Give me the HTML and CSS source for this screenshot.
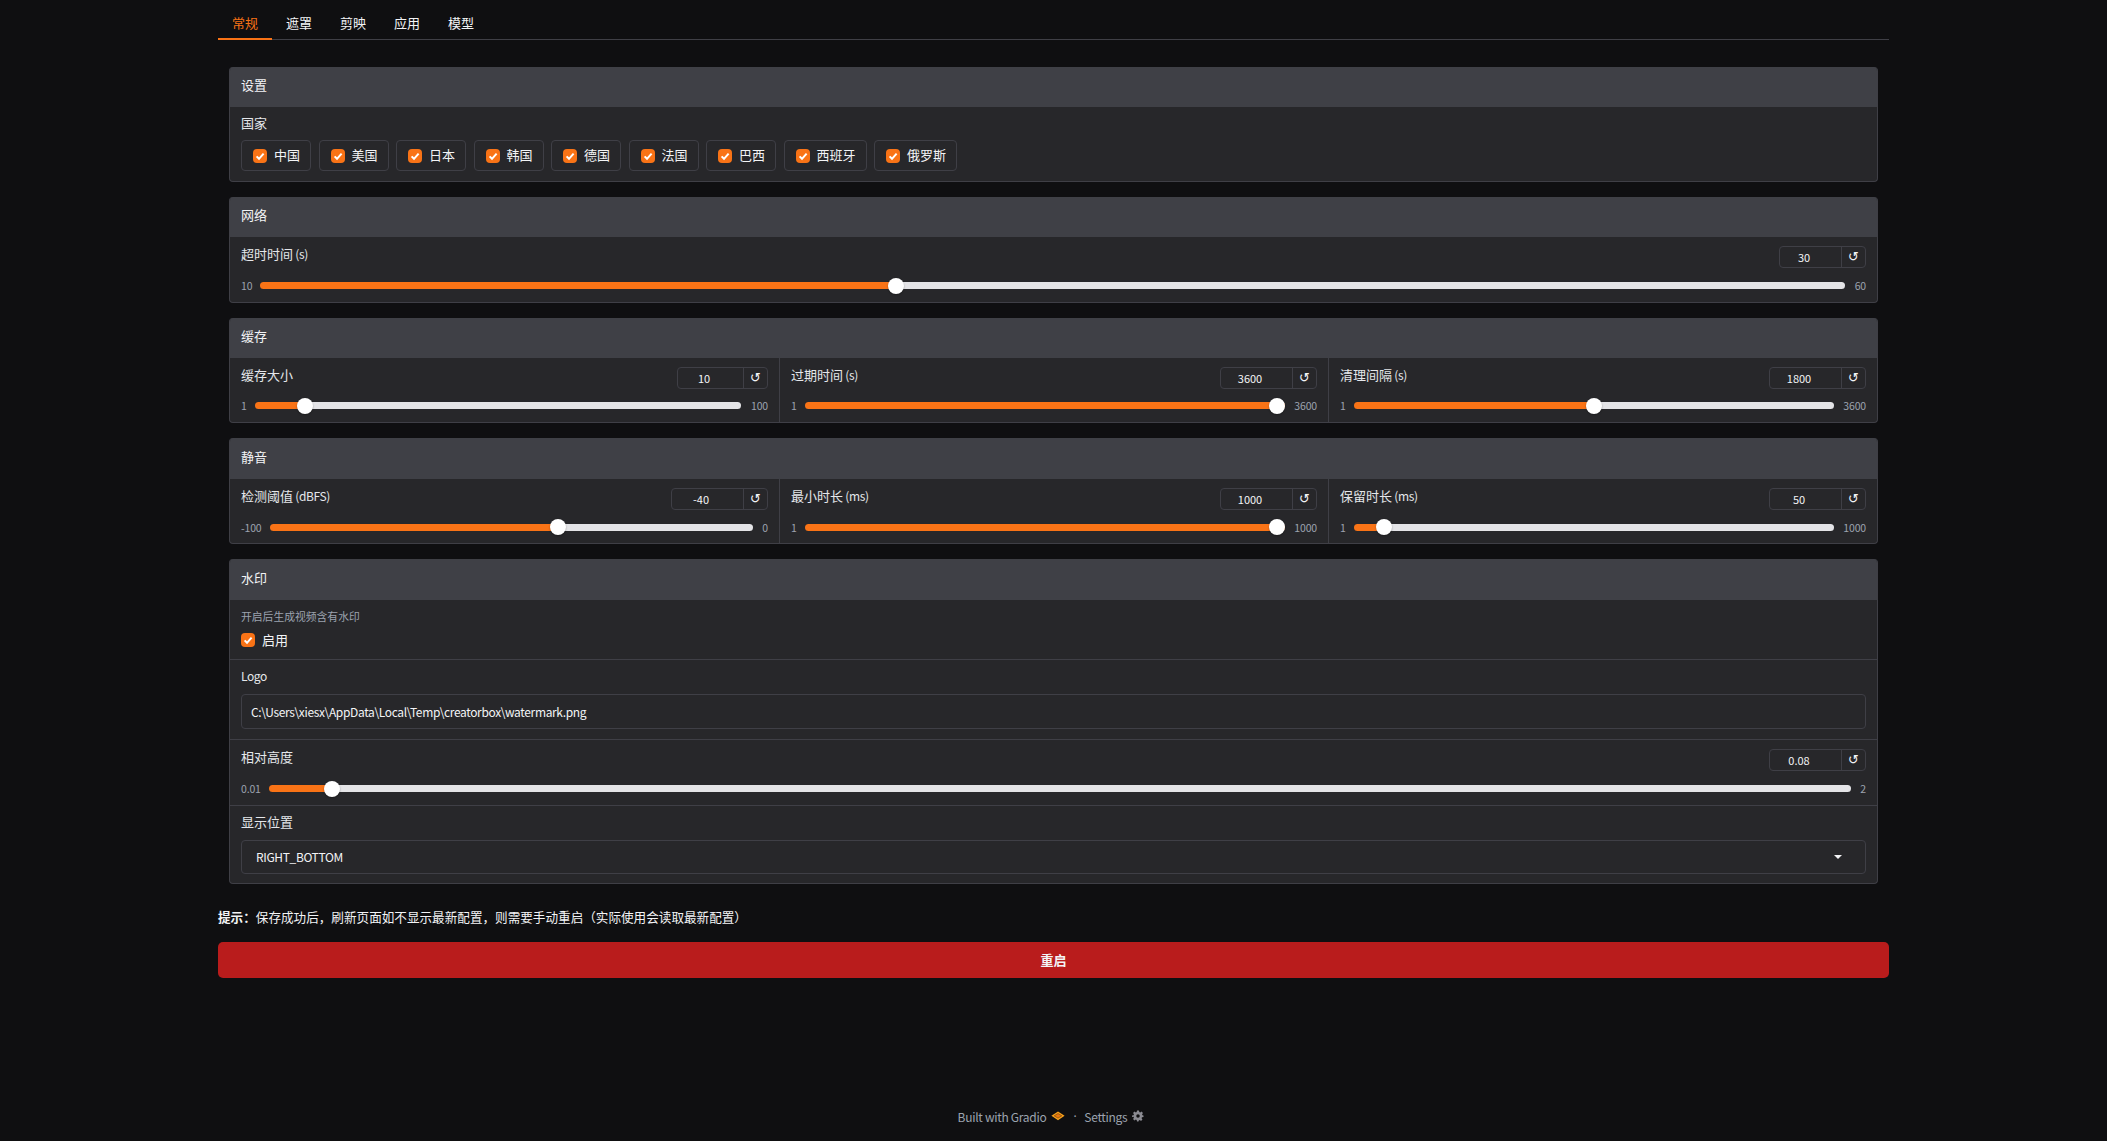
FILE: index.html
```html
<!DOCTYPE html>
<html lang="zh">
<head>
<meta charset="utf-8">
<title>设置</title>
<link rel="stylesheet" href="styles.css">
</head>
<body>
<div class="app">
  <nav class="tabs">
    <button class="tab active">常规</button>
    <button class="tab">遮罩</button>
    <button class="tab">剪映</button>
    <button class="tab">应用</button>
    <button class="tab">模型</button>
  </nav>

  <main class="panels">
    <section class="panel">
      <h2 class="panel-head">设置</h2>
      <div class="cell cell-countries">
        <div class="label">国家</div>
        <div class="options">
          <label class="option"><input type="checkbox" checked><span>中国</span></label>
          <label class="option"><input type="checkbox" checked><span>美国</span></label>
          <label class="option"><input type="checkbox" checked><span>日本</span></label>
          <label class="option"><input type="checkbox" checked><span>韩国</span></label>
          <label class="option"><input type="checkbox" checked><span>德国</span></label>
          <label class="option"><input type="checkbox" checked><span>法国</span></label>
          <label class="option"><input type="checkbox" checked><span>巴西</span></label>
          <label class="option"><input type="checkbox" checked><span>西班牙</span></label>
          <label class="option"><input type="checkbox" checked><span>俄罗斯</span></label>
        </div>
      </div>
    </section>

    <section class="panel">
      <h2 class="panel-head">网络</h2>
      <div class="cell slider-cell">
        <div class="slider-top">
          <span class="label">超时时间<span class="unit"> (s)</span></span>
          <div class="num num-a"><span class="num-val">30</span><span class="reset">↺</span></div>
        </div>
        <div class="slider-row">
          <span class="lim">10</span>
          <input class="range" type="range" min="10" max="60" value="30" style="--p:40%">
          <span class="lim">60</span>
        </div>
      </div>
    </section>

    <section class="panel">
      <h2 class="panel-head">缓存</h2>
      <div class="cols">
        <div class="cell slider-cell">
          <div class="slider-top">
            <span class="label">缓存大小</span>
            <div class="num num-b"><span class="num-val">10</span><span class="reset">↺</span></div>
          </div>
          <div class="slider-row">
            <span class="lim">1</span>
            <input class="range" type="range" min="1" max="100" value="10" style="--p:10.5%">
            <span class="lim">100</span>
          </div>
        </div>
        <div class="cell slider-cell">
          <div class="slider-top">
            <span class="label">过期时间<span class="unit"> (s)</span></span>
            <div class="num num-c"><span class="num-val">3600</span><span class="reset">↺</span></div>
          </div>
          <div class="slider-row">
            <span class="lim">1</span>
            <input class="range" type="range" min="1" max="3600" value="3600" style="--p:100%">
            <span class="lim">3600</span>
          </div>
        </div>
        <div class="cell slider-cell">
          <div class="slider-top">
            <span class="label">清理间隔<span class="unit"> (s)</span></span>
            <div class="num num-c"><span class="num-val">1800</span><span class="reset">↺</span></div>
          </div>
          <div class="slider-row">
            <span class="lim">1</span>
            <input class="range" type="range" min="1" max="3600" value="1800" style="--p:50%">
            <span class="lim">3600</span>
          </div>
        </div>
      </div>
    </section>

    <section class="panel">
      <h2 class="panel-head panel-head-tall">静音</h2>
      <div class="cols">
        <div class="cell slider-cell">
          <div class="slider-top">
            <span class="label">检测阈值<span class="unit"> (dBFS)</span></span>
            <div class="num num-c"><span class="num-val">-40</span><span class="reset">↺</span></div>
          </div>
          <div class="slider-row">
            <span class="lim">-100</span>
            <input class="range" type="range" min="-100" max="0" value="-40" style="--p:60%">
            <span class="lim">0</span>
          </div>
        </div>
        <div class="cell slider-cell">
          <div class="slider-top">
            <span class="label">最小时长<span class="unit"> (ms)</span></span>
            <div class="num num-c"><span class="num-val">1000</span><span class="reset">↺</span></div>
          </div>
          <div class="slider-row">
            <span class="lim">1</span>
            <input class="range" type="range" min="1" max="1000" value="1000" style="--p:100%">
            <span class="lim">1000</span>
          </div>
        </div>
        <div class="cell slider-cell">
          <div class="slider-top">
            <span class="label">保留时长<span class="unit"> (ms)</span></span>
            <div class="num num-c"><span class="num-val">50</span><span class="reset">↺</span></div>
          </div>
          <div class="slider-row">
            <span class="lim">1</span>
            <input class="range" type="range" min="1" max="1000" value="50" style="--p:6%">
            <span class="lim">1000</span>
          </div>
        </div>
      </div>
    </section>

    <section class="panel">
      <h2 class="panel-head panel-head-tall">水印</h2>
      <div class="cell cell-enable">
        <div class="desc">开启后生成视频含有水印</div>
        <label class="single"><input type="checkbox" checked><span>启用</span></label>
      </div>
      <div class="cell cell-logo">
        <div class="label latin">Logo</div>
        <div class="field field-text">C:\Users\xiesx\AppData\Local\Temp\creatorbox\watermark.png</div>
      </div>
      <div class="cell slider-cell">
        <div class="slider-top">
          <span class="label">相对高度</span>
          <div class="num num-c"><span class="num-val">0.08</span><span class="reset">↺</span></div>
        </div>
        <div class="slider-row">
          <span class="lim">0.01</span>
          <input class="range" type="range" min="0.01" max="2" step="0.01" value="0.08" style="--p:3.9%">
          <span class="lim">2</span>
        </div>
      </div>
      <div class="cell cell-select">
        <div class="label">显示位置</div>
        <div class="field field-select"><span>RIGHT_BOTTOM</span><i class="caret"></i></div>
      </div>
    </section>
  </main>

  <p class="hint"><strong>提示&#xFF1A;</strong>保存成功后&#xFF0C;刷新页面如不显示最新配置&#xFF0C;则需要手动重启&#xFF08;实际使用会读取最新配置&#xFF09;</p>
  <button class="restart">重启</button>
</div>

<footer class="footer">
  <span>Built with Gradio</span>
  <svg class="logo" viewBox="0 0 14 10" aria-hidden="true"><path d="M7 .4 13.6 4.8 7 9.2 .4 4.8Z" fill="#f9a01b"/><path d="M3.2 4.8 7 2.5 10.8 4.8 7 7.1Z" fill="#e8760f" stroke="#7a4a10" stroke-width=".7"/></svg>
  <span class="dot">·</span>
  <span>Settings</span>
  <svg class="gear" viewBox="0 0 24 24" aria-hidden="true"><path fill="#8b8b92" fill-rule="evenodd" d="M10 1h4l.6 3.1 1.9.8 2.6-1.8 2.8 2.8-1.8 2.6.8 1.9L23 11v3l-3.1.6-.8 1.9 1.8 2.6-2.8 2.8-2.6-1.8-1.9.8L13 23h-3l-.6-3.1-1.9-.8-2.6 1.8-2.8-2.8 1.8-2.6-.8-1.9L0 14v-3l3.1-.6.8-1.9L2.1 5.9l2.8-2.8 2.6 1.8 1.9-.8ZM12 8.5a3.5 3.5 0 1 0 0 7 3.5 3.5 0 0 0 0-7Z"/></svg>
</footer>
</body>
</html>
```

FILE: styles.css
```css
* { box-sizing: border-box; }

html, body { margin: 0; padding: 0; height: 100%; }

body {
  background: #0f0f11;
  color: #f3f4f6;
  font-family: "Noto Sans CJK SC", "Noto Sans", sans-serif;
  font-size: 13px;
  display: flex;
  flex-direction: column;
}

.app { width: 1671px; margin: 0 0 0 218px; flex: 1; }

.tabs {
  display: flex;
  height: 40px;
  border-bottom: 1px solid #3f3f46;
}

.tab {
  width: 54px;
  height: 40px;
  padding: 6px 0 0;
  background: none;
  border: 0;
  border-bottom: 2px solid transparent;
  color: #f3f4f6;
  font: inherit;
}

.tab.active { color: #f97316; border-bottom-color: #f97316; }

.panels {
  display: flex;
  flex-direction: column;
  gap: 15px;
  padding: 27px 11px 0;
}

.panel {
  background: #27272a;
  border: 1px solid #3f3f46;
  border-top: 0;
  border-radius: 4px;
  overflow: hidden;
}

.panel-head {
  margin: 0 -1px;
  height: 40px;
  padding: 0 12px;
  background: #3f4046;
  font-size: 13px;
  font-weight: 400;
  line-height: 36px;
  color: #f3f4f6;
}

.panel-head-tall { height: 41px; line-height: 38px; }

.label { line-height: 16px; color: #e5e7eb; }
.unit { font-size: 12px; letter-spacing: -.4px; }
.latin { font-size: 12px; letter-spacing: -.4px; }

.cell { padding: 0 11px; }
.cell + .cell { border-top: 1px solid #3f3f46; }

.cell-countries { padding-top: 8px; padding-bottom: 10.2px; }

.options { display: flex; gap: 7.3px; margin-top: 9px; }

.option {
  display: flex;
  align-items: center;
  gap: 7px;
  height: 31px;
  padding: 0 10.2px 0 11px;
  border: 1px solid #3f3f46;
  border-radius: 4px;
  color: #f3f4f6;
}

.option span { padding-bottom: 2px; }

input[type="checkbox"] {
  appearance: none;
  width: 14px;
  height: 14px;
  margin: 0;
  flex: none;
  border-radius: 4px;
  background: #f97316 url("data:image/svg+xml,%3Csvg xmlns='http://www.w3.org/2000/svg' viewBox='0 0 14 14'%3E%3Cpath d='M3.6 7.4 6 9.8 10.6 4.6' fill='none' stroke='white' stroke-width='2'/%3E%3C/svg%3E") center / 100% no-repeat;
}

.cols { display: grid; grid-template-columns: 1fr 1fr 1fr; }
.cols > .cell + .cell { border-top: 0; border-left: 1px solid #3f3f46; }

.slider-cell { padding-top: 9px; padding-bottom: 8px; }

.slider-top {
  display: flex;
  justify-content: space-between;
  align-items: flex-start;
  height: 22px;
}

.num {
  display: flex;
  height: 22px;
  border: 1px solid #3f3f46;
  border-radius: 4px;
  font-size: 11px;
  line-height: 21px;
  text-align: center;
  color: #f3f4f6;
}

.num-val { flex: 1; padding: 0 13px 0 0; }
.num-a { width: 87px; }
.num-b { width: 91px; }
.num-c { width: 97px; }

.reset {
  width: 24px;
  flex: none;
  border-left: 1px solid #3f3f46;
  font-family: "DejaVu Sans", sans-serif;
  font-size: 13px;
  line-height: 20px;
}

.slider-row {
  display: flex;
  align-items: center;
  gap: 9px;
  margin-top: 9.4px;
  height: 16px;
}

.lim { font-size: 10.5px; letter-spacing: -.15px; color: #9ca3af; flex: none; }

.range {
  flex: 1;
  min-width: 0;
  height: 7px;
  margin: 0 .7px 0 -1px;
  appearance: none;
  border-radius: 4px;
  background: linear-gradient(#f97316, #f97316) left / var(--p) 100% no-repeat, #e4e4e7;
  cursor: pointer;
}

.range::-webkit-slider-thumb {
  appearance: none;
  width: 16px;
  height: 16px;
  border-radius: 50%;
  background: #fff;
  box-shadow: 0 1px 2px rgba(0, 0, 0, .3);
}

.cell-enable { height: 59px; padding-top: 8px; }
.desc { font-size: 10.8px; line-height: 16px; color: #9ca3af; }
.single { display: flex; align-items: center; gap: 7px; margin-top: 7px; line-height: 18px; }

.cell-logo { height: 80px; padding-top: 8px; }

.field {
  margin-top: 10px;
  border: 1px solid #3f3f46;
  border-radius: 4px;
  color: #f3f4f6;
  font-size: 12px;
  letter-spacing: -.36px;
}

.field-text { height: 35px; padding: 0 9px; line-height: 33px; }

.cell-select { height: 78.5px; padding-top: 8px; }
.field-select {
  display: flex;
  align-items: center;
  justify-content: space-between;
  height: 34px;
  padding: 0 23px 0 14px;
}

.caret {
  width: 0;
  height: 0;
  border: 4px solid transparent;
  border-top: 4px solid #f3f4f6;
  border-bottom: 0;
}

.hint { margin: 24px 0 0; line-height: 18px; font-size: 12.6px; color: #f3f4f6; }
.hint strong { font-weight: 700; }

.restart {
  display: block;
  width: 100%;
  height: 36px;
  margin-top: 16px;
  padding: 0 0 2px;
  border: 0;
  border-radius: 5px;
  background: #b91c1c;
  color: #f3f4f6;
  font: 700 13px "Noto Sans CJK SC", sans-serif;
}

.footer {
  display: flex;
  justify-content: center;
  align-items: center;
  height: 48px;
  padding: 0 5px 2px 0;
  font-size: 12px;
  letter-spacing: -.3px;
  color: #9ca3af;
}

.logo { width: 14px; height: 10px; margin-left: 5px; }
.dot { margin: 0 8px; font-family: "Noto Sans", sans-serif; }
.gear { width: 12px; height: 12px; margin-left: 5px; }
```
